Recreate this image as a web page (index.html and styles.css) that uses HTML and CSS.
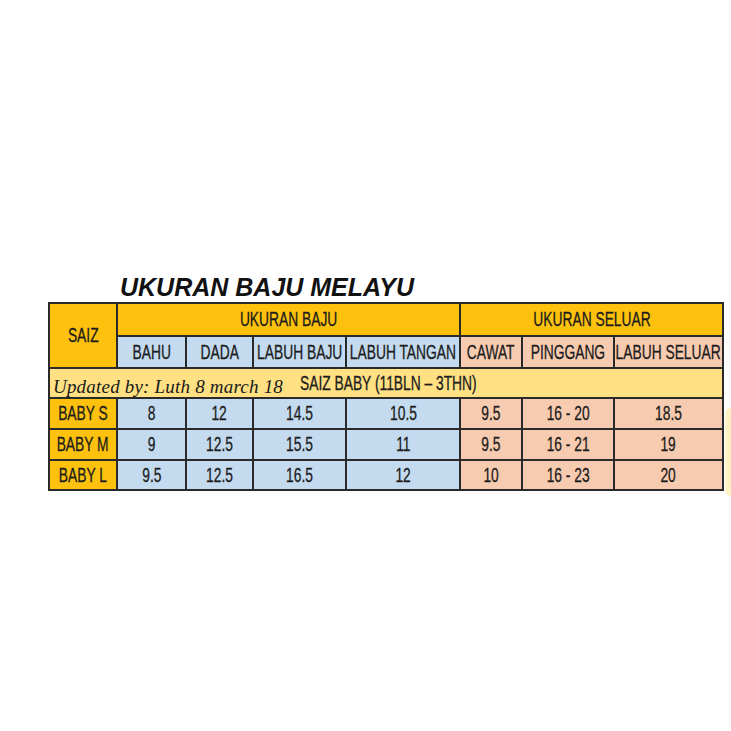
FILE: index.html
```html
<!DOCTYPE html>
<html>
<head>
<meta charset="utf-8">
<link rel="stylesheet" href="styles.css">
</head>
<body>
<div class="page">
  <h1 class="title">UKURAN BAJU MELAYU</h1>
  <table class="chart">
    <colgroup>
      <col class="c-saiz"><col class="c-bahu"><col class="c-dada"><col class="c-lbaju"><col class="c-ltangan"><col class="c-cawat"><col class="c-ping"><col class="c-lseluar">
    </colgroup>
    <tr class="r-head1">
      <td class="orange" rowspan="2"><span class="t">SAIZ</span></td>
      <td class="orange" colspan="4"><span class="t">UKURAN BAJU</span></td>
      <td class="orange" colspan="3"><span class="t">UKURAN SELUAR</span></td>
    </tr>
    <tr class="r-head2">
      <td class="blue"><span class="t">BAHU</span></td>
      <td class="blue"><span class="t">DADA</span></td>
      <td class="blue"><span class="t">LABUH BAJU</span></td>
      <td class="blue"><span class="t">LABUH TANGAN</span></td>
      <td class="salmon"><span class="t">CAWAT</span></td>
      <td class="salmon"><span class="t">PINGGANG</span></td>
      <td class="salmon"><span class="t">LABUH SELUAR</span></td>
    </tr>
    <tr class="r-group">
      <td class="yellow" colspan="8">
        <div class="group">
          <span class="note">Updated by: Luth 8 march 18</span>
          <span class="t">SAIZ BABY (11BLN – 3THN)</span>
        </div>
      </td>
    </tr>
    <tr class="r-data">
      <td class="orange"><span class="t">BABY S</span></td>
      <td class="blue"><span class="t">8</span></td>
      <td class="blue"><span class="t">12</span></td>
      <td class="blue"><span class="t">14.5</span></td>
      <td class="blue"><span class="t">10.5</span></td>
      <td class="salmon"><span class="t">9.5</span></td>
      <td class="salmon"><span class="t">16 - 20</span></td>
      <td class="salmon"><span class="t">18.5</span></td>
    </tr>
    <tr class="r-data">
      <td class="orange"><span class="t">BABY M</span></td>
      <td class="blue"><span class="t">9</span></td>
      <td class="blue"><span class="t">12.5</span></td>
      <td class="blue"><span class="t">15.5</span></td>
      <td class="blue"><span class="t">11</span></td>
      <td class="salmon"><span class="t">9.5</span></td>
      <td class="salmon"><span class="t">16 - 21</span></td>
      <td class="salmon"><span class="t">19</span></td>
    </tr>
    <tr class="r-data">
      <td class="orange"><span class="t">BABY L</span></td>
      <td class="blue"><span class="t">9.5</span></td>
      <td class="blue"><span class="t">12.5</span></td>
      <td class="blue"><span class="t">16.5</span></td>
      <td class="blue"><span class="t">12</span></td>
      <td class="salmon"><span class="t">10</span></td>
      <td class="salmon"><span class="t">16 - 23</span></td>
      <td class="salmon"><span class="t">20</span></td>
    </tr>
  </table>
  <div class="edge-glow"></div>
</div>
</body>
</html>
```

FILE: styles.css
```css
html, body {
  margin: 0;
  padding: 0;
  background: #ffffff;
}

.page {
  position: relative;
  width: 731px;
  height: 731px;
  overflow: hidden;
  padding-top: 272px;
  box-sizing: border-box;
}

.title {
  margin: 0 0 0 120px;
  font-family: "Liberation Sans", Arial, sans-serif;
  font-weight: bold;
  font-style: italic;
  font-size: 25px;
  line-height: 30px;
  color: #111;
}

.chart {
  margin-left: 48px;
  border-collapse: collapse;
  table-layout: fixed;
  width: 676px;
  font-family: "Liberation Sans", Arial, sans-serif;
  font-size: 20px;
  color: #1c1c1c;
}

.chart td {
  border: 2px solid #2a2a2a;
  padding: 0;
  text-align: center;
  vertical-align: middle;
  white-space: nowrap;
}

.c-saiz { width: 68px; }
.c-bahu { width: 69px; }
.c-dada { width: 67px; }
.c-lbaju { width: 93px; }
.c-ltangan { width: 114px; }
.c-cawat { width: 62px; }
.c-ping { width: 92px; }
.c-lseluar { width: 109px; }

.r-head1 { height: 33px; }
.r-head2 { height: 32px; }
.r-group { height: 30px; }
.r-data { height: 31px; }
.r-data:last-child { height: 30px; }

.orange { background: #fec20e; }
.blue { background: #c3daef; }
.salmon { background: #f7cbb0; }
.yellow { background: #ffe083; }

.t {
  display: inline-block;
  margin: 0 -45px;
  transform: scaleX(0.69);
  transform-origin: center;
  line-height: 20px;
  -webkit-text-stroke: 0.3px #1c1c1c;
}

.group {
  display: flex;
  align-items: center;
  height: 28px;
  text-align: left;
}

.group .t {
  margin: 0 0 0 17px;
  transform-origin: left center;
}

.note {
  font-family: "Liberation Serif", "Times New Roman", serif;
  font-style: italic;
  font-size: 19px;
  line-height: 20px;
  color: #1a1a1a;
  margin-left: 3px;
  margin-top: 8px;
  letter-spacing: 0.2px;
}

.edge-glow {
  position: absolute;
  left: 725px;
  top: 408px;
  width: 14px;
  height: 88px;
  border-radius: 6px;
  background: linear-gradient(to right, #fff6cf, #fce99b);
}
```
